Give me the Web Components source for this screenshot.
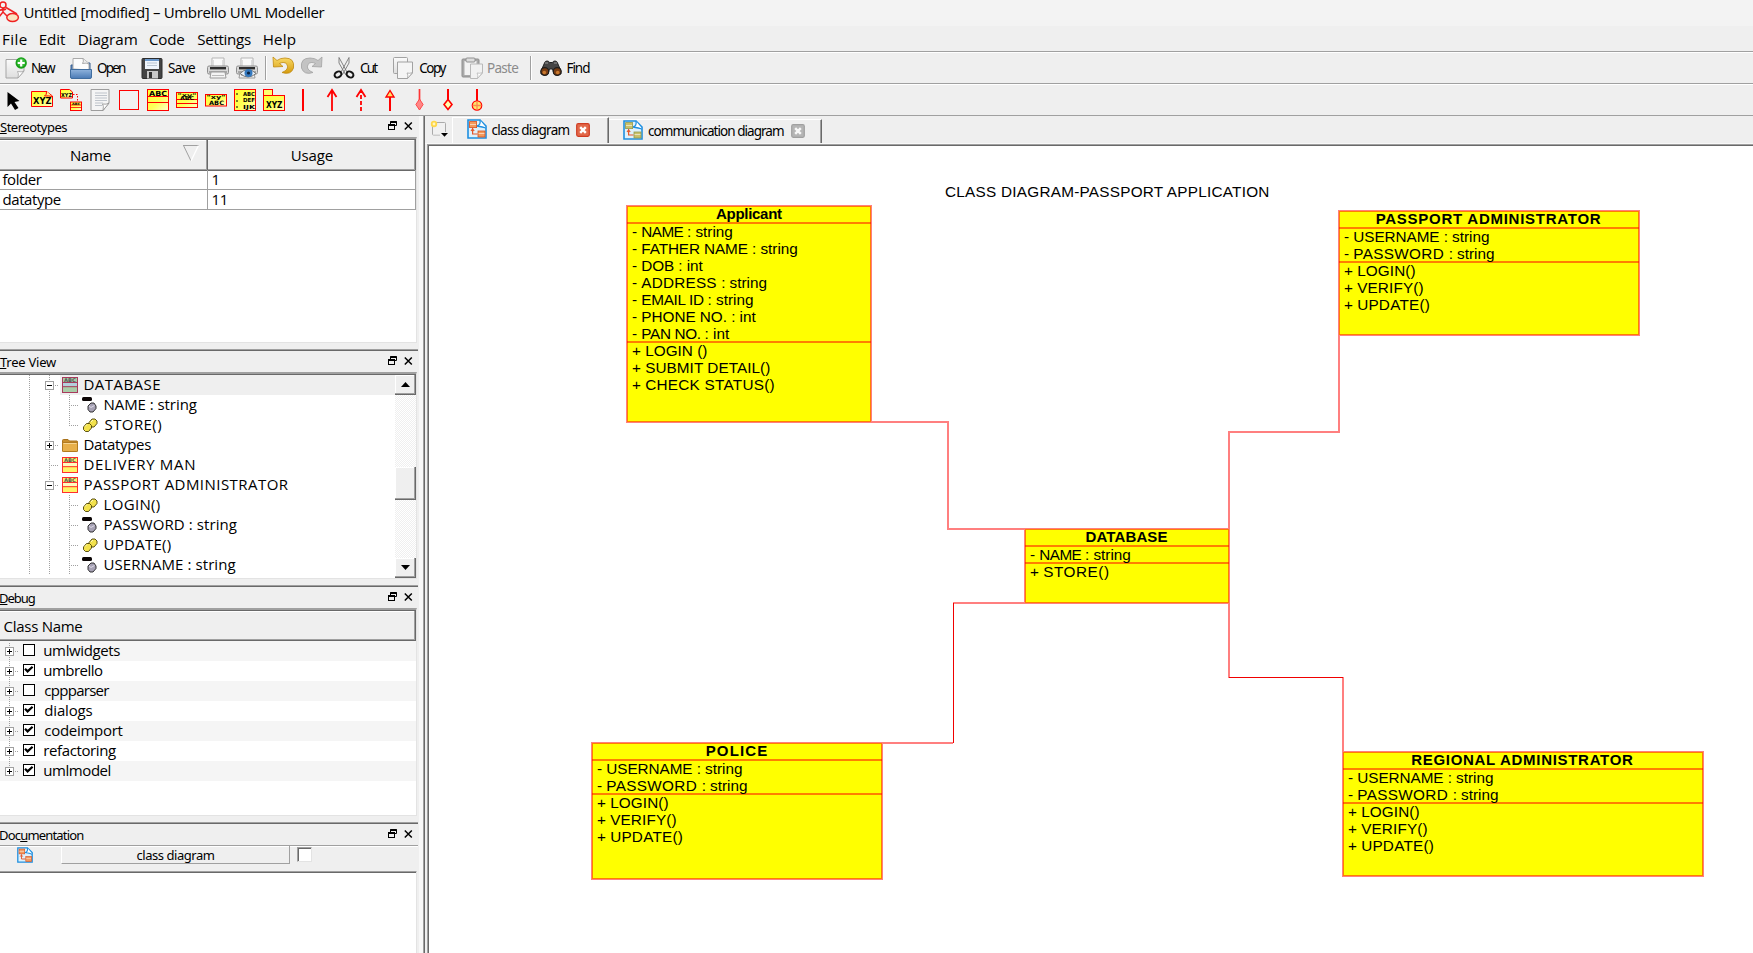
<!DOCTYPE html>
<html lang="en">
<head>
<meta charset="utf-8">
<title>Untitled [modified] – Umbrello UML Modeller</title>
<style>
html,body{margin:0;height:100%;overflow:hidden;background:#efefef}
body{font-family:"Open Sans","Noto Sans",sans-serif;color:#000}
</style>
</head>
<body>
<umbrello-app></umbrello-app>
<script>
const UI = '"Open Sans","Noto Sans",sans-serif';
const TAHOMA = '"Noto Sans","Open Sans",sans-serif';
const ARIAL = '"Liberation Sans",Arial,sans-serif';
const ctx = document.createElement('canvas').getContext('2d');

/* A label whose glyphs span exactly w pixels; an optional tail keeps its natural spacing. */
function label(text, w, size, font = UI, o = {}) {
  ctx.font = `${o.bold ? 'bold ' : ''}${size}px ${font}`;
  const m = ctx.measureText(text);
  const ink = m.actualBoundingBoxLeft + m.actualBoundingBoxRight;
  const lead = o.tail ? text.slice(0, 2) : '';
  const cut = o.tail ? text.indexOf(' :') : -1;
  const head = text.slice(lead.length, cut > 0 ? cut + 1 : undefined);
  const n = cut > 0 ? head.length : Math.max(1, head.length - 1);
  const ls = ((w - ink) / n).toFixed(3);
  let body = head;
  if (o.u !== undefined) body = head.slice(0, o.u) + '<u>' + head[o.u] + '</u>' + head.slice(o.u + 1);
  return `<span style='display:inline-block;white-space:pre;width:${w}px;text-indent:${m.actualBoundingBoxLeft.toFixed(2)}px;font:${o.bold ? 'bold' : 'normal'} ${size}px ${font};line-height:inherit'>${lead}<span style="letter-spacing:${ls}px">${body}</span>${cut > 0 ? text.slice(cut + 1) : ''}</span>`;
}

class Base extends HTMLElement {
  connectedCallback() {
    if (this.shadowRoot) return;
    this.attachShadow({mode: 'open'}).innerHTML = this.view();
  }
  a(n) { return this.getAttribute(n); }
}

const diagramGlyph = (c1, c2) => `<path d="M1 1h12l6 6v12H1z" fill="#dff1fb" stroke="#1f8fe0" stroke-width="1.6"/><path d="M13 1q1 5-3 6q6 1 9 2" fill="#fff" stroke="#1f8fe0" stroke-width="1.3"/><rect x="2.6" y="2.6" width="7" height="6" fill="${c1}" stroke="${c2}" stroke-width=".8"/><path d="M5.6 9v6h5M4 12l1.6-2l1.6 2" fill="none" stroke="#e5572b" stroke-width="1.2"/><rect x="11" y="12" width="7" height="6" fill="${c1}" stroke="${c2}" stroke-width=".8"/><path d="M3 5.5h6M11.5 14.5h6" stroke="#fff" stroke-width=".8" opacity=".7"/>`;
const classGlyph = (fill, line, hi) => `<rect x=".5" y=".5" width="15" height="15" fill="${fill}" stroke="${line}"/><rect x="1" y="6" width="14" height="3" fill="${hi}"/><path d="M0 5.5h16M0 9.7h16" stroke="${line}"/><text x="2" y="4.800" font-family="DejaVu Sans" font-weight="bold" font-size="5" textLength="12" lengthAdjust="spacingAndGlyphs" fill="#555">ABC</text>`;
const bigText = (x, y, s, len, t) => `<text x="${x}" y="${y}" font-family="DejaVu Sans" font-weight="bold" font-size="${s}" textLength="${len}" lengthAdjust="spacingAndGlyphs">${t}</text>`;
const grads = `<defs><linearGradient id="y" x1="0" y1="0" x2="1" y2="1"><stop offset="0" stop-color="#ffff30"/><stop offset=".55" stop-color="#ffff58"/><stop offset="1" stop-color="#ffffd0"/></linearGradient><linearGradient id="g" x1="0" y1="0" x2="0" y2="1"><stop offset="0" stop-color="#fbfbfb"/><stop offset="1" stop-color="#dedede"/></linearGradient><linearGradient id="b" x1="0" y1="0" x2="0" y2="1"><stop offset="0" stop-color="#8fb3dc"/><stop offset="1" stop-color="#4a7ab5"/></linearGradient><linearGradient id="o" x1="0" y1="0" x2="0" y2="1"><stop offset="0" stop-color="#fbdc6a"/><stop offset="1" stop-color="#d49a0c"/></linearGradient></defs>`;
const printer = `<path d="M5 1h12v9H5z" fill="#fafafa" stroke="#b5b5b5"/><path d="M6.500 3v6M15.500 3v6" stroke="#ddd"/><rect x=".5" y="9" width="21" height="8" rx="1.500" fill="#d8d8d8" stroke="#8f8f8f"/><path d="M3 11.200h16" stroke="#2e2e2e" stroke-width="2.400"/><path d="M2 15h18" stroke="#777"/><path d="M4 15h14l1 6H3z" fill="#f4f4f4" stroke="#9a9a9a"/><path d="M5 18.500h12" stroke="#bbb"/>`;
const icons = {
  logo: [20, 22, `<g fill="none" stroke="#f02222" stroke-width="1.500"><circle cx="3" cy="4" r="3"/><path d="M3 7v5M-2 9.500L6 8l-2 1M3 11l-4 5M3 11l4 4M6 6.500L17 13"/><ellipse cx="12.600" cy="16.500" rx="5.800" ry="3.900" fill="#f9e3bf"/></g>`],
  fresh: [22, 22, `<path d="M1 2.500h18V14l-6 7H1z" fill="url(#g)" stroke="#a5a5a5"/><path d="M13 21q1-5-.5-6.500q4 1 6.500-.5z" fill="#fff" stroke="#a5a5a5" stroke-width=".8"/><circle cx="16.200" cy="6" r="5.700" fill="#18a018"/><circle cx="16.200" cy="5.500" r="4" fill="#38bd38"/><path d="M16.200 2.500v7M12.700 6h7" stroke="#fff" stroke-width="2.200"/>`],
  open: [22, 22, `<path d="M1 21V8h3l1.500-2H20v14z" fill="#5c86ba" stroke="#365f92"/><path d="M3 12V1.500h10l6 5V13z" fill="#fcfcfc" stroke="#aaa"/><path d="M13 1.500q1 3-.5 5q4-1 6.500.5" fill="#eee" stroke="#999" stroke-width=".8"/><path d="M.5 12.500h21v7.500q0 1.500-1.500 1.500H2q-1.500 0-1.500-1.500z" fill="url(#b)" stroke="#406d9f"/>`],
  save: [22, 22, `<rect x="1" y="1.500" width="20" height="20" rx="1" fill="#444" stroke="#2c2c2c"/><rect x="4" y="2" width="14" height="10" fill="#eef4fb"/><path d="M4 3h14" stroke="#6b98cb" stroke-width="2"/><path d="M6 6h10M6 8.500h10" stroke="#b9c5d2"/><rect x="6" y="14" width="11" height="7.500" fill="#c9c9c9"/><rect x="8" y="15" width="3" height="6" fill="#333"/>`],
  print: [22, 22, printer],
  preview: [22, 22, printer + `<path d="M4 16.500q8-8 16 0q-8 7-16 0z" fill="#eaf1f8" stroke="#777"/><circle cx="12.500" cy="16" r="4" fill="#3478bd"/><circle cx="12.500" cy="16" r="1.600" fill="#0c2240"/>`],
  undo: [22, 22, `<path transform="translate(0 -1)" d="M1 1l.5 10l9.500-.5l-3.500-3q5-2.500 7.500 1q2.500 5-5 8q9 3 11.500-4.500Q23 2 13 2Q8 2 5 4.500z" fill="url(#o)" stroke="#c08a10" stroke-width=".8"/>`],
  redo: [22, 22, `<path transform="translate(0 -1)" d="M21 1l-.5 10l-9.500-.5l3.500-3q-5-2.500-7.500 1q-2.500 5 5 8q-9 3-11.500-4.500Q-1 2 9 2q5 0 8 2.500z" fill="#c3c3c3" stroke="#a2a2a2" stroke-width=".8"/>`],
  cut: [22, 22, `<path d="M6 .5L14.500 16l-2 1.500L6 6zM16 .5L7.500 16l2 1.500L16 6z" fill="#f0f0f0" stroke="#777" stroke-width=".9"/><ellipse cx="5" cy="17.500" rx="3.600" ry="2.800" transform="rotate(-30 5 17.500)" fill="none" stroke="#161616" stroke-width="2"/><ellipse cx="17" cy="17.500" rx="3.600" ry="2.800" transform="rotate(30 17 17.500)" fill="none" stroke="#161616" stroke-width="2"/>`],
  copy: [22, 22, `<rect x="1.500" y=".5" width="14" height="16" rx="1" fill="url(#g)" stroke="#a2a2a2"/><path d="M5.500 5h15v11l-5 5.500h-10z" fill="#f5f5f5" stroke="#a2a2a2"/><path d="M15.500 21.500q1-4-.5-5.500q3 .8 5.500-.5z" fill="#fff" stroke="#a2a2a2" stroke-width=".8"/>`],
  paste: [22, 22, `<rect x="1" y="2" width="17" height="18" rx="1" fill="#aaa" stroke="#8f8f8f"/><rect x="3.500" y="4" width="12" height="14" fill="#f3f3f3"/><rect x="5" y="1" width="9" height="4" rx="1" fill="#ddd" stroke="#909090"/><path d="M9.500 7h12v9l-5 5.500h-7z" fill="#f1f1f1" stroke="#b9b9b9"/><path d="M16.500 21.500q1-4-.5-5.500q3 .8 5.500-.5z" fill="#fff" stroke="#b9b9b9" stroke-width=".8"/>`],
  find: [22, 16, `<path d="M1 11L4.500 3q.5-2 2.500-2t2.500 1.500h3Q13 1 15 1t2.500 2L21 11v3h-7l-1.500-5h-3L8 14H1z" fill="#454545" stroke="#222"/><path d="M5 3h3M14 3h3" stroke="#999"/><circle cx="4.800" cy="11.500" r="3.900" fill="#7a3d12" stroke="#1d1d1d" stroke-width="1.200"/><circle cx="17.200" cy="11.500" r="3.900" fill="#7a3d12" stroke="#1d1d1d" stroke-width="1.200"/><circle cx="4.300" cy="12.500" r="1.800" fill="#c9792f"/><circle cx="17.700" cy="12.500" r="1.800" fill="#c9792f"/>`],
  pointer: [22, 22, `<path d="M5.500 3v15l3.500-3.500l4 6.500l3.500-2l-4-6l5-1z" fill="#000"/>`],
  xyz: [22, 22, `<path d="M.5 2.500h15l6 4.500v10.500H.5z" fill="url(#y)" stroke="red"/><path d="M15.500 2q.5 4-2 5q4-.5 7.500.5" fill="#fff38a" stroke="red"/>` + bigText(2, 15, 8.500, 18.500, 'XYZ')],
  xyzlink: [22, 22, `<path d="M.5.500h9l3 2.500v6H.5z" fill="url(#y)" stroke="red"/>` + bigText(1, 7.500, 5.500, 11, 'XYZ') + `<path d="M13 5.500h4.500V12" fill="none" stroke="red" stroke-dasharray="1.500 1.500"/><rect x="10.500" y="13" width="11" height="8.500" fill="url(#y)" stroke="red"/><path d="M10.500 16h11M10.500 18.500h11" stroke="red" stroke-width=".8"/>` + bigText(12, 15.700, 3, 8, 'ABC')],
  note: [22, 22, `<path d="M2 .5h18V14l-6 7.500H2z" fill="#f5f5f5" stroke="#9d9d9d"/><path d="M6 4h12M6 6.500h12M6 9h12M6 11.500h12M6 14h8M6 16.500h7" stroke="#b9bec6" stroke-width=".9"/><path d="M14 21.500q1-5-.5-6.500q4 .8 6.500-1z" fill="#fff" stroke="#8e8e8e" stroke-width=".8"/>`],
  box: [22, 22, `<rect x="1.500" y="1.500" width="19" height="19" fill="#f1f1f1" stroke="red"/>`],
  class: [22, 22, `<rect x=".5" y=".5" width="21" height="21" fill="url(#y)" stroke="red"/><path d="M0 7.500h22M0 13.500h22" stroke="red"/>` + bigText(2, 7, 7, 18, 'ABC')],
  iface: [22, 22, `<rect x=".5" y="3.500" width="21" height="15" fill="url(#y)" stroke="red"/><path d="M0 10.500h22M0 14.500h22" stroke="red"/>` + bigText(1.500, 7.500, 5, 19, '"xy"') + bigText(4, 10.500, 5, 14, 'ABC')],
  dtype: [22, 22, `<rect x=".5" y="5.500" width="21" height="11.500" fill="url(#y)" stroke="red"/>` + bigText(1.500, 10, 5.500, 19, '"xy"') + bigText(4, 15.800, 6, 15, 'ABC')],
  enum: [22, 22, `<rect x=".5" y=".5" width="21" height="21" fill="url(#y)" stroke="red"/><path d="M2 5h2M2 12h2M2 18h2" stroke="#000"/>` + bigText(9, 6.500, 5.500, 12, 'ABC') + bigText(9, 13.200, 5.500, 12, 'DEF') + bigText(9, 19.700, 5.500, 12, 'IJK')],
  pack: [22, 22, `<rect x=".5" y=".5" width="9" height="6" fill="#ffff70" stroke="red"/><rect x=".5" y="6.500" width="21" height="15" fill="url(#y)" stroke="red"/>` + bigText(3, 19, 9.500, 16.500, 'XYZ')],
  line: [22, 22, `<path d="M11 0v22" stroke="red" stroke-width="2"/>`],
  arrow: [22, 22, `<path d="M11 1v21M6.500 8L11 1l4.500 7" fill="none" stroke="red" stroke-width="1.800"/>`],
  dash: [22, 22, `<path d="M11 1v3M11 6v4M11 12v4M11 18v4M6.500 8L11 1l4.500 7" fill="none" stroke="red" stroke-width="1.800"/>`],
  gen: [22, 22, `<path d="M11 8v14" stroke="red" stroke-width="2"/><path d="M11 1.500L7 8h8z" fill="#ffe26a" stroke="red" stroke-width="1.400"/>`],
  comp: [22, 22, `<path d="M11.500 0v11" stroke="#ff3434" stroke-width="1.700"/><path d="M11.500 10l3.600 5.500l-3.600 5.500l-3.600-5.500z" fill="#ff8686" stroke="#ff4a4a"/>`],
  aggr: [22, 22, `<path d="M11 0v11" stroke="red" stroke-width="2"/><path d="M11 10.500l4 5l-4 5l-4-5z" fill="#ffffb0" stroke="red" stroke-width="1.600"/>`],
  cont: [22, 22, `<path d="M11 0v12" stroke="red" stroke-width="2"/><circle cx="11" cy="16.500" r="4.700" fill="#ffe96a" stroke="red" stroke-width="1.300"/><path d="M11 12v9M6.500 16.500h9" stroke="#ff8a50" stroke-width="1.300"/>`],
  float: [9, 9, `<path d="M2.500 3.500v-3h6v4h-2" fill="none" stroke="#000"/><path d="M2.500 1h6" stroke="#000" stroke-width="2"/><rect x=".5" y="3.500" width="6" height="5" fill="#efefef" stroke="#000"/><path d="M0 4.500h7" stroke="#000"/>`],
  close: [9, 8, `<path d="M.8.500l7 7M7.800.5l-7 7" stroke="#000" stroke-width="1.500"/>`],
  diagram: [20, 20, diagramGlyph('#f49a5c', '#d9501f')],
  comm: [20, 20, diagramGlyph('#c9c06a', '#8f9a50')],
  klass: [16, 16, classGlyph('#fff566', '#ff2f2f', '#fffcc0')],
  klassSel: [16, 16, classGlyph('#a9cda8', '#a83a5c', '#b4d0dc')],
  folder: [16, 16, `<path d="M.5 14V3.500q0-1 1-1H6l1.500 1.500H15q.5 0 .5 1V14z" fill="#c98f2c" stroke="#a8711a"/><path d="M.5 5.500h15V14q0 .5-.7.500H1.200q-.7 0-.7-.5z" fill="#e8b04a" stroke="#b27b20"/><path d="M1.500 6.500h13" stroke="#f8d590"/>`],
  attr: [16, 16, `<rect x="0" y="0" width="10" height="4" rx="1.500" fill="#0b0505"/><path d="M6 9l3-3h3l2 3v2.500l-3 3.500H8l-2-2.500z" fill="#a7a2b5" stroke="#222" stroke-width=".9"/><path d="M7 9l2 1.500l3.500-2" stroke="#dcd9e6" fill="none"/>`],
  oper: [16, 16, `<path d="M7 5.500L10 2h3l2 2v2.500L12 10h-3l-2-2z" fill="#f3e24c" stroke="#4a4205" stroke-width=".9"/><path d="M1.500 10l3-3.500h3l2 2V11l-3 3.500h-3l-2-2z" fill="#f3e24c" stroke="#4a4205" stroke-width=".9"/><path d="M3 9.500l2-2M9 5l2-2" stroke="#fffac0"/>`],
  x: [14, 14, `<rect x=".7" y=".7" width="12.600" height="12.600" rx="1.500" fill="#e2694a" stroke="#d03c22" stroke-width="1.200"/><path d="M4.200 4.200l5.600 5.600M9.800 4.200L4.200 9.800" stroke="#fff" stroke-width="2.400"/>`],
  xoff: [14, 14, `<rect x=".7" y=".7" width="12.600" height="12.600" rx="1.500" fill="#b5b5b5" stroke="#a0a0a0" stroke-width="1.200"/><path d="M4.200 4.200l5.600 5.600M9.800 4.200L4.200 9.800" stroke="#f8f8f8" stroke-width="2.400"/>`],
  newtab: [18, 18, `<path d="M2.500 2.500h12q1 0 1 1V12M2.500 6v8q0 1 1 1H10" fill="none" stroke="#aaa"/><rect x="3" y="3" width="12" height="11.500" fill="#f1f1f1"/><circle cx="4" cy="4" r="3.200" fill="#ffd84a"/><circle cx="4" cy="4" r="1.400" fill="#fff5c0"/><path d="M11 13h7l-3.500 3.800z" fill="#000"/>`],
  up: [9, 5, `<path d="M0 5L4.500 0L9 5z"/>`],
  down: [9, 5, `<path d="M0 0L4.500 5L9 0z"/>`],
  sort: [16, 17, `<path d="M0 .5h16M.5.500l7.500 15.500" fill="none" stroke="#a0a0a0"/><path d="M15.500.500L8 16" stroke="#fff" stroke-width="1.300"/>`],
  check: [8, 8, `<path d="M0 2.800l2.600 2.600L7.600.800" fill="none" stroke="#000" stroke-width="2.200"/>`]
};
customElements.define('u-icon', class extends Base {
  view() {
    const [w, h, s] = icons[this.a('n')];
    const z = this.a('s') ? +this.a('s') : w;
    return `<style>:host{display:block;flex:none;width:${z}px;height:${h * z / w}px}svg{display:block;overflow:visible}</style><svg width="${z}" height="${h * z / w}" viewBox="0 0 ${w} ${h}">${grads}${s}</svg>`;
  }
});
const icon = (n, st = '', s = '') => `<u-icon n="${n}" ${s ? `s="${s}"` : ''} style="${st}"></u-icon>`;

customElements.define('title-bar', class extends Base {
  view() {
    return `<style>:host{display:flex;height:26px;background:#f3f3f3;box-sizing:border-box}.t{margin:0 0 0 4.500px;line-height:24px}</style>
    ${icon('logo', 'margin-top:1px')}<div class="t">${label('Untitled [modified] – Umbrello UML Modeller', 300, 15)}</div>`;
  }
});
customElements.define('menu-bar', class extends Base {
  view() {
    const items = [['File', 23.7, 3], ['Edit', 26.3, 13], ['Diagram', 58, 12.7], ['Code', 35.3, 12.3], ['Settings', 53.7, 13], ['Help', 32, 12.7]];
    return `<style>:host{display:flex;height:25px;line-height:27px}</style>` + items.map(([t, w, g]) => `<div style="margin-left:${g}px">${label(t, w, 15.200)}</div>`).join('');
  }
});
const barCss = `:host{display:flex;box-sizing:border-box;border-top:1px solid #a0a0a0;box-shadow:inset 0 1px #fff;}`;
customElements.define('tool-button', class extends Base {
  view() {
    const t = this.a('t');
    return `<style>:host{display:flex;height:29px;color:${this.a('off') !== null ? '#8b8b8b' : '#000'};line-height:29px}u-icon{margin-top:${this.a('n') === 'find' ? 7 : 4}px}.l{margin-left:${this.a('g')}px}</style>${icon(this.a('n'))}${t ? `<div class="l">${label(t, +this.a('w'), 13.500, TAHOMA)}</div>` : ''}`;
  }
});
customElements.define('main-toolbar', class extends Base {
  view() {
    const b = (n, m, t = '', w = 0, g = 0, off = '') => `<tool-button n="${n}" t="${t}" w="${w}" g="${g}" ${off} style="margin-left:${m}px"></tool-button>`;
    return `<style>${barCss}:host{height:32px;padding-top:1px}i{width:1px;height:24px;margin-top:3px;background:#a0a0a0;border-right:1px solid #fff}</style>` +
      b('fresh', 5, 'New', 24, 5) + b('open', 14, 'Open', 29, 5) + b('save', 15.400, 'Save', 27, 4.600) +
      b('print', 12.400) + b('preview', 7) + '<i style="margin-left:7px"></i>' + b('undo', 5) + b('redo', 7) +
      b('cut', 10, 'Cut', 18.300, 4.600) + b('copy', 14, 'Copy', 27.300, 5) + b('paste', 14, 'Paste', 30.300, 5.400, 'off') +
      '<i style="margin-left:11.700px"></i>' + b('find', 8, 'Find', 22.700, 5.500);
  }
});
customElements.define('draw-toolbar', class extends Base {
  view() {
    return `<style>${barCss}:host{height:32px;padding:5px 0 0 2px;gap:7px}</style>` +
      ['pointer', 'xyz', 'xyzlink', 'note', 'box', 'class', 'iface', 'dtype', 'enum', 'pack', 'line', 'arrow', 'dash', 'gen', 'comp', 'aggr', 'cont'].map(n => icon(n)).join('');
  }
});

/* Dock: caption strip over a slotted body */
customElements.define('dock-panel', class extends Base {
  view() {
    return `<style>:host{display:flex;flex-direction:column;box-sizing:border-box}
    .cap{display:flex;height:21px;flex:none;line-height:20px}
    .cap div{flex:1}::slotted(*){flex:1;min-height:0}</style>
    <div class="cap"><div>${label(this.a('t'), +this.a('w'), 13, TAHOMA, {u: +this.a('u')})}</div>${icon('float', `margin:${this.a('k')}px 7px 0 0`)}${icon('close', `margin:${+this.a('k') + 1}px 5px 0 0`)}</div><slot></slot>`;
  }
});
const frameCss = `:host{display:flex;flex-direction:column;box-sizing:border-box;width:417px;background:#fff;border-top:2px solid #a0a0a0;border-right:1px solid #e3e3e3;border-bottom:1px solid #e3e3e3;box-shadow:inset 0 1px #696969;padding-top:1px;overflow:hidden}`;
const headCss = `.h{box-sizing:border-box;background:#efefef;border-bottom:1px solid #696969;border-right:1px solid #696969;box-shadow:inset -1px -1px #a0a0a0,inset 0 1px #fff;}`;
customElements.define('stereotype-table', class extends Base {
  view() {
    const r = (a, aw, b, bw) => `<div class="r"><div class="c" style="padding-left:2.500px">${label(a, aw, 15)}</div><div class="c" style="padding-left:4.500px">${label(b, bw, 15)}</div></div>`;
    return `<style>${frameCss}${headCss}.r{display:grid;grid-template-columns:208px 208px;height:20px;line-height:19px}.hd{height:30px;line-height:30px}.c{box-sizing:border-box;border-right:1px solid #a0a0a0;border-bottom:1px solid #a0a0a0}.h{display:flex}</style>
    <div class="r hd"><div class="h"><div style="margin-left:71px">${label('Name', 39.700, 15)}</div>${icon('sort', 'margin:5px 0 0 72px')}</div><div class="h"><div style="margin-left:83.700px">${label('Usage', 41, 15)}</div></div></div>
    ${r('folder', 39.300, '1', 5)}${r('datatype', 58.300, '11', 13.300)}`;
  }
});
const guide = k => {
  const D = 'stroke="#a0a0a0" stroke-dasharray="1 1"';
  const v = {v: 'M9.500 0v20', t: 'M9.500 0v20M11 10.500h8', l: 'M9.500 0v11M11 10.500h8', p: 'M9.500 0v20M15 10.500h4', f: 'M9.500 2v18M15 10.500h4', e: 'M9.500 0v10M15 10.500h4', m: 'M9.500 0v20M15 10.500h4', _: ''}[k];
  const bx = 'pmfe'.includes(k) ? `<rect x="5.500" y="6.500" width="8" height="8" fill="#fff" stroke="#a0a0a0"/><path d="M7 10.500h5${k !== 'm' ? 'M9.500 8v5' : ''}" stroke="#000"/>` : '';
  return `<svg width="20" height="20" style="flex:none;display:block"><path d="${v}" fill="none" ${D}/>${bx}</svg>`;
};
customElements.define('tree-row', class extends Base {
  view() {
    const sel = this.a('sel') !== null;
    return `<style>:host{display:flex;height:20px;line-height:18px;flex:none}.b{display:flex;flex:1;${sel ? 'background:#efefef' : ''}}</style>${[...this.a('g')].map(guide).join('')}<div class="b">${icon(this.a('n'), 'margin:2px 6.500px 0 2px')}${label(this.a('t'), +this.a('w'), 15)}</div>`;
  }
});
customElements.define('scroll-bar', class extends Base {
  view() {
    return `<style>:host{display:flex;flex-direction:column;width:21px;background:repeating-conic-gradient(#efefef 0 25%,#fff 0 50%) 0 0/2px 2px}.k{box-sizing:border-box;height:20px;background:#efefef;border-right:1px solid #696969;border-bottom:1px solid #696969;box-shadow:inset -1px -1px #a0a0a0,inset 1px 1px #fff;display:grid;place-items:center}</style>
    <div class="k">${icon('up')}</div><div class="k" style="height:33px;margin:72px 0 58px"></div><div class="k">${icon('down')}</div>`;
  }
});
customElements.define('tree-view', class extends Base {
  view() {
    const rows = [['_vm', 'klassSel', 'DATABASE', 75.700, 'sel'], ['_vvt', 'attr', 'NAME : string', 92.300], ['_vvl', 'oper', 'STORE()', 56.700], ['_vp', 'folder', 'Datatypes', 66.700], ['_vt', 'klass', 'DELIVERY MAN', 109.700], ['_vm', 'klass', 'PASSPORT ADMINISTRATOR', 204.300], ['_vvt', 'oper', 'LOGIN()', 55.300], ['_vvt', 'attr', 'PASSWORD : string', 132.300], ['_vvt', 'oper', 'UPDATE()', 66.300], ['_vvt', 'attr', 'USERNAME : string', 131]];
    return `<style>${frameCss}:host{flex-direction:row}.r{flex:1;overflow:hidden}</style><div class="r">${rows.map(r => `<tree-row g="${r[0]}" n="${r[1]}" t="${r[2]}" w="${r[3]}" ${r[4] || ''}></tree-row>`).join('')}</div><scroll-bar></scroll-bar>`;
  }
});
customElements.define('debug-list', class extends Base {
  view() {
    const rows = [['umlwidgets', 76, 0], ['umbrello', 58.700, 1], ['cppparser', 65, 0], ['dialogs', 48.300, 1], ['codeimport', 78.300, 1], ['refactoring', 71.700, 1], ['umlmodel', 66.300, 1]];
    return `<style>${frameCss}${headCss}.h{height:30px;line-height:30px;padding-left:3.600px;flex:none;width:416px}.r{display:flex;height:20px;line-height:19px}.r:nth-child(odd){background:#f5f5f5}.k{box-sizing:border-box;width:12px;height:12px;border:1px solid #000;margin:3px 9.300px 0 3px;display:grid;place-items:center;background:#fff}</style><div class="h">${label('Class Name', 78.700, 15)}</div>` +
      rows.map(([t, w, c], i) => `<div class="r">${guide(i === 6 ? 'e' : i ? 'p' : 'f')}<div class="k">${c ? icon('check') : ''}</div>${label(t, w, 15)}</div>`).join('');
  }
});
customElements.define('doc-editor', class extends Base {
  view() {
    return `<style>:host{display:flex;flex-direction:column}.bar{display:flex;height:26px;flex:none;border-top:1px solid #a0a0a0;box-shadow:inset 0 1px #fff;box-sizing:border-box}.b{box-sizing:border-box;width:229px;height:18px;line-height:17px;border-right:1px solid #a0a0a0;border-bottom:1px solid #a0a0a0;border-left:1px solid #fff;margin-left:28px;padding-left:74.500px}.k{box-sizing:border-box;width:15px;height:15px;margin:1px 0 0 7px;background:#fff;border:1px solid #a0a0a0;box-shadow:inset 1px 1px #696969;border-right-color:#e3e3e3;border-bottom-color:#e3e3e3}.e{box-sizing:border-box;flex:1;width:417px;background:#fff;border-top:1px solid #a0a0a0;border-right:1px solid #e3e3e3;box-shadow:inset 0 1px #696969}</style>
    <div class="bar">${icon('diagram', 'margin:1px 0 0 17px', 16)}<div class="b">${label('class diagram', 78.300, 13, TAHOMA)}</div><div class="k"></div></div><div class="e"></div>`;
  }
});
customElements.define('left-docks', class extends Base {
  view() {
    return `<style>:host{display:flex;flex-direction:column;width:418px;flex:none}dock-panel+dock-panel{border-top:1px solid #a0a0a0;box-shadow:inset 0 1px #696969;padding-top:1px}</style>
    <dock-panel t="Stereotypes" w="67.300" u="0" k="5" style="height:227px"><stereotype-table></stereotype-table></dock-panel>
    <dock-panel t="Tree View" w="57" u="0" k="5" style="height:230px;margin-top:6px"><tree-view></tree-view></dock-panel>
    <dock-panel t="Debug" w="34.700" u="0" k="5" style="height:231px;margin-top:6px"><debug-list></debug-list></dock-panel>
    <dock-panel t="Documentation" w="83.300" u="3" k="5" style="flex:1;margin-top:6px;min-height:0"><doc-editor></doc-editor></dock-panel>`;
  }
});
customElements.define('diagram-tab', class extends Base {
  view() {
    const on = this.a('on') !== null;
    return `<style>:host{display:flex;box-sizing:border-box;border-left:${on ? '1px solid #fff' : '0'};border-top:1px solid #fff;border-right:1px solid #696969;box-shadow:inset -1px 0 #a0a0a0;width:${this.a('full')}px;height:${on ? 26 : 24}px;margin-top:${on ? 0 : 2}px;line-height:${on ? 24 : 23}px;padding-left:14px;align-items:flex-start}</style>${icon(this.a('n'), `margin:${on ? 1 : 0}px ${on ? 4.500 : 5}px 0 0`)}${label(this.a('t'), +this.a('w'), 13.500, TAHOMA)}${icon(on ? 'x' : 'xoff', `margin:${on ? 5 : 4}px 0 0 6.500px`)}`;
  }
});
customElements.define('tab-strip', class extends Base {
  view() {
    return `<style>:host{display:flex;height:28px;flex:none;box-sizing:border-box;padding-top:1px;box-shadow:inset 0 -1px #f8f8f8}</style>${icon('newtab', 'margin:3px 4px 0 5px')}<diagram-tab on n="diagram" t="class diagram" w="78" full="157"></diagram-tab><diagram-tab n="comm" t="communication diagram" w="136" full="213"></diagram-tab>`;
  }
});
customElements.define('uml-class', class extends Base {
  view() {
    const d = JSON.parse(this.a('d'));
    const L = '#ff000080', l = 'box-shadow:0 -1px ' + L + ',inset 0 1px ' + L;
    const row = ([t, w]) => `<div class="r">${label(t, w, 15.300, ARIAL, {tail: true})}</div>`;
    return `<style>:host{position:absolute;display:block;left:${d.x}px;top:${d.y}px;width:${d.w}px;height:${d.h}px;background:#ff0}
    .f{position:absolute;inset:-1px;border:2px solid ${L}}.t{height:17px;line-height:15px;display:flex;justify-content:center}.s{${l};padding-left:5px}.r{height:17px;line-height:17px}</style>
    <div class="t">${label(d.t[0], d.t[1], 15, ARIAL, {bold: true})}</div><div class="s">${d.a.map(row).join('')}</div><div class="s">${d.o.map(row).join('')}</div><div class="f"></div>`;
  }
});
customElements.define('diagram-canvas', class extends Base {
  view() {
    const up = [['- USERNAME : string', 145], ['- PASSWORD : string', 150]];
    const ops = [['+ LOGIN()', 71.500], ['+ VERIFY()', 79.500], ['+ UPDATE()', 85.700]];
    const nodes = [
      {x: 627, y: 206, w: 244, h: 216, t: ['Applicant', 66], a: [['- NAME : string', 100.300], ['- FATHER NAME : string', 165.300], ['- DOB : int', 71.600], ['- ADDRESS : string', 134.500], ['- EMAIL ID : string', 121.500], ['- PHONE NO. : int', 124.500], ['- PAN NO. : int', 97.900]], o: [['+ LOGIN ()', 75.300], ['+ SUBMIT DETAIL()', 138.500], ['+ CHECK STATUS()', 142.500]]},
      {x: 1339, y: 211, w: 300, h: 124, t: ['PASSPORT ADMINISTRATOR', 224.700], a: up, o: ops},
      {x: 1025, y: 529, w: 204, h: 74, t: ['DATABASE', 81], a: [['- NAME : string', 100.300]], o: [['+ STORE()', 78.900]]},
      {x: 592, y: 743, w: 290, h: 136, t: ['POLICE', 60.700], a: up, o: ops},
      {x: 1343, y: 752, w: 360, h: 124, t: ['REGIONAL ADMINISTRATOR', 221.700], a: up, o: ops}];
    return `<style>:host{display:block;position:relative;flex:1;background:#fff;border-top:1px solid #a0a0a0;border-left:1px solid #a0a0a0;box-shadow:inset 1px 1px #696969;overflow:hidden}
    .p{position:absolute;left:-428px;top:-145px}.c{position:absolute;left:945px;top:182px;line-height:18px;white-space:nowrap}svg{position:absolute;left:0;top:0}</style>
    <div class="p"><svg width="1753" height="953"><g fill="none" stroke="#f00" stroke-opacity=".5" stroke-width="2"><path d="M872 422H948V529H1024M1339 336V432H1229V528M1024 603H953M953 743H883M1229 604V678M1343 677V751"/></g><path d="M953.500 603v140M1229 677.500h114" stroke="#f00000" fill="none"/></svg>
    <div class="c">${label('CLASS DIAGRAM-PASSPORT APPLICATION', 324.500, 15.300, ARIAL)}</div>
    ${nodes.map(n => `<uml-class d='${JSON.stringify(n)}'></uml-class>`).join('')}</div>`;
  }
});
customElements.define('umbrello-app', class extends Base {
  view() {
    return `<style>:host{display:flex;flex-direction:column;height:953px;background:#efefef}.w{display:flex;flex:1;min-height:0;border-top:1px solid #a0a0a0}.s{width:5px;border-right:1px solid #a0a0a0;background:linear-gradient(90deg,#efefef 1px,#f8f8f8 1px);box-shadow:1px 0 #696969;margin-right:3px}.m{display:flex;flex-direction:column;flex:1;min-width:0}tab-strip{margin-left:-2px}</style>
    <title-bar></title-bar><menu-bar></menu-bar><main-toolbar></main-toolbar><draw-toolbar></draw-toolbar>
    <div class="w"><left-docks></left-docks><div class="s"></div><div class="m"><tab-strip></tab-strip><diagram-canvas></diagram-canvas></div></div>`;
  }
});
</script>
</body>
</html>
